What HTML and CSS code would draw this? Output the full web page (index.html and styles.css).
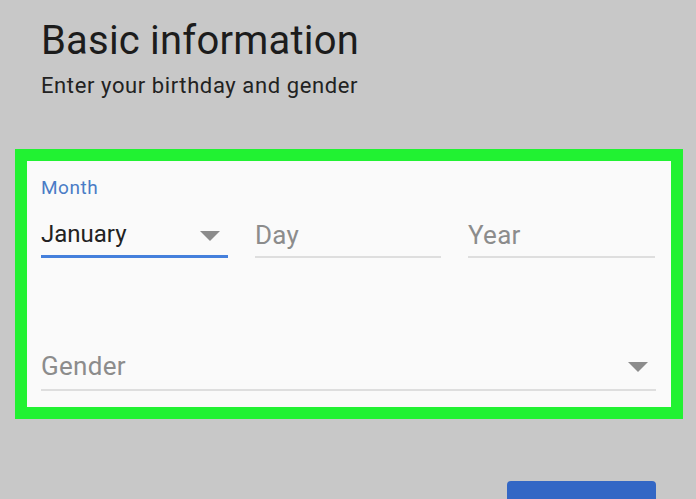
FILE: index.html
```html
<!DOCTYPE html>
<html lang="en">
  <head>
    <meta charset="UTF-8" />
    <meta name="viewport" content="width=device-width, initial-scale=1.0" />
    <title>Basic information</title>
    <link rel="stylesheet" href="styles.css">
  </head>
  <body>
    <div class="page">
      <header class="intro">
        <h1>Basic information</h1>
        <p>Enter your birthday and gender</p>
      </header>
      <div class="card">
        <div class="birthday-row">
          <div class="field active">
            <label>Month</label>
            <div class="field-value">
              <span>January</span>
              <span class="caret"></span>
            </div>
          </div>
          <div class="field">
            <label></label>
            <div class="field-value placeholder"><span>Day</span></div>
          </div>
          <div class="field">
            <label></label>
            <div class="field-value placeholder"><span>Year</span></div>
          </div>
        </div>
        <div class="field gender">
          <div class="field-value placeholder">
            <span>Gender</span>
            <span class="caret"></span>
          </div>
        </div>
      </div>
      <div class="actions">
        <button class="next-btn" aria-label="Next"></button>
      </div>
    </div>
  </body>
</html>
```

FILE: styles.css
```css
html,
body {
  margin: 0;
  font-family: Roboto, "Noto Sans", Arial, sans-serif;
  background: #c8c8c8;
  color: #202020;
}
.page {
  height: 499px;
  overflow: hidden;
}
.intro {
  padding: 17px 0 0 41px;
  height: 132px;
  box-sizing: border-box;
}
.intro h1 {
  margin: 0;
  font-size: 40px;
  font-weight: 400;
  line-height: 48px;
  letter-spacing: 0.2px;
  color: #1c1c1c;
}
.intro p {
  margin: 8px 0 0;
  font-size: 22px;
  line-height: 26px;
  letter-spacing: 0.6px;
  color: #222;
}
.card {
  margin: 17px 0 0 15px;
  width: 668px;
  height: 270px;
  box-sizing: border-box;
  border: 12px solid #21f232;
  background: #fafafa;
  padding: 14px 15px 0 14px;
}
.birthday-row {
  display: grid;
  grid-template-columns: 187px 186px 187px;
  column-gap: 27px;
}
.field label {
  display: block;
  height: 26px;
  font-size: 19px;
  line-height: 26px;
  letter-spacing: 0.5px;
  color: #4a7cc6;
}
.field-value {
  display: flex;
  align-items: flex-end;
  justify-content: space-between;
  height: 57px;
  box-sizing: border-box;
  border-bottom: 2px solid #dedede;
  padding-bottom: 6px;
  font-size: 26px;
  line-height: 30px;
  letter-spacing: 0.3px;
  color: #222;
}
.field.active .field-value {
  border-bottom: 3px solid #4580dc;
  font-size: 24px;
  letter-spacing: 0;
}
.placeholder {
  color: #8c8c8c;
}
.caret {
  width: 0;
  height: 0;
  margin: 0 8px 8px 0;
  border-left: 10px solid transparent;
  border-right: 10px solid transparent;
  border-top: 10px solid #8c8c8c;
}
.gender {
  margin-top: 83px;
}
.gender .field-value {
  height: 50px;
  padding-bottom: 8px;
}
.gender .caret {
  margin-bottom: 9px;
}
.actions {
  display: flex;
  justify-content: flex-end;
  padding: 62px 40px 0 0;
}
.next-btn {
  width: 149px;
  height: 44px;
  border: 0;
  border-radius: 4px;
  background: #3367c5;
}
```
